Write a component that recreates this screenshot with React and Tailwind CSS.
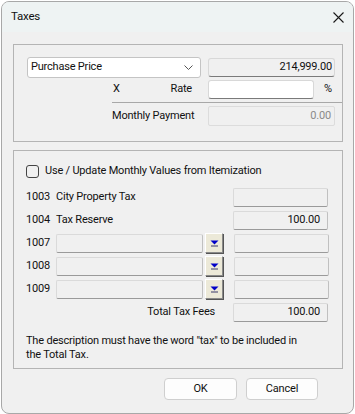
import React from 'react';

const DropBtn = () => (
  <div className="w-[18px] h-[20px] bg-[#ece9d8] border border-t-white border-l-white border-b-[#8a8a8a] border-r-[#8a8a8a] flex items-center justify-center shadow-[1px_1px_0_#555]">
    <svg width="9" height="7" viewBox="0 0 9 7">
      <polygon points="0.5,0.5 8.5,0.5 4.5,4.5" fill="#0000c8" />
      <rect x="1" y="5.5" width="7" height="1" fill="#3a3a6a" />
    </svg>
  </div>
);

const Field = ({ value, className = '' }) => (
  <div className={`h-[19px] w-[95px] bg-[#f0f0f0] border border-[#dadada] border-b-[#9a9a9a] border-r-[#c0c0c0] rounded-[2px] flex items-center justify-end pr-[7px] ${className}`}>
    {value}
  </div>
);

const ItemRow = ({ code }) => (
  <div className="flex items-center h-[20px] mt-[3px]">
    <span className="w-[30px]">{code}</span>
    <div className="w-[147px] h-[19px] bg-[#f0f0f0] border border-[#dadada] border-b-[#9a9a9a] border-r-[#c0c0c0] rounded-[2px]" />
    <div className="ml-[2px]">
      <DropBtn />
    </div>
    <Field className="ml-[11px]" />
  </div>
);

export default function App() {
  return (
    <div className="w-[355px] h-[414px] bg-white font-['Roboto','Liberation_Sans',Arial,sans-serif] text-[11px] tracking-[-0.2px] text-[#111]">
      <div className="ml-[1px] mt-[1px] w-[353px] h-[413px] rounded-[8px] border border-[#a8a8a8] overflow-hidden bg-[#f0f0f0] flex flex-col">
        {/* Title bar */}
        <div className="h-[30px] bg-[#eef3f3] flex items-center justify-between pl-[9px] pr-[9px]">
          <span className="text-[11.5px]">Taxes</span>
          <svg width="11" height="11" viewBox="0 0 11 11">
            <path d="M0.5 0.5 L10.5 10.5 M10.5 0.5 L0.5 10.5" stroke="#1a1a1a" strokeWidth="1.1" />
          </svg>
        </div>

        <div className="pl-[11px] pt-[12px]">
          {/* Group 1 */}
          <div className="w-[330px] h-[98px] border border-[#b4b4b4] pt-[12px] pl-[13px]">
            <div className="flex">
              <div className="w-[174px] h-[21px] bg-white border border-[#c4c4c4] rounded-[3px] flex items-center justify-between pl-[3px] pr-[7px]">
                <span>Purchase Price</span>
                <svg width="9" height="6" viewBox="0 0 9 6">
                  <path d="M0.5 0.5 L4.5 4.5 L8.5 0.5" stroke="#555" fill="none" />
                </svg>
              </div>
              <div className="ml-[7px] mt-[1px] w-[127px] h-[19px] bg-[#f0f0f0] border border-[#d8d8d8] border-b-[#7a7a7a] rounded-[3px] flex items-center justify-end pr-[2px]">
                214,999.00
              </div>
            </div>
            <div className="flex items-center mt-[2px] pl-[85px]">
              <div className="w-[96px] flex justify-between pr-[16px] pl-[1px]">
                <span>X</span>
                <span>Rate</span>
              </div>
              <div className="w-[106px] h-[19px] bg-white border border-[#d8d8d8] border-b-[#7a7a7a] rounded-[3px]" />
              <span className="ml-[10px]">%</span>
            </div>
            <div className="ml-[85px] mt-[3px] h-px bg-[#a8a8a8]" />
            <div className="flex items-center mt-[3px] pl-[85px]">
              <span className="w-[96px]">Monthly Payment</span>
              <div className="w-[127px] h-[20px] bg-[#f0f0f0] border border-[#dcdcdc] rounded-[2px] flex items-center justify-end pr-[3px] text-[#8a8a8a]">
                0.00
              </div>
            </div>
          </div>

          {/* Group 2 */}
          <div className="mt-[8px] w-[330px] h-[219px] border border-[#b4b4b4] pt-[14px] pl-[12px]">
            <div className="flex items-center h-[13px]">
              <div className="w-[13px] h-[13px] border border-[#444] rounded-[3px]" />
              <span className="ml-[6px]">Use / Update Monthly Values from Itemization</span>
            </div>
            <div className="flex items-center h-[19px] mt-[10px]">
              <span className="w-[30px]">1003</span>
              <span className="w-[177px]">City Property Tax</span>
              <Field />
            </div>
            <div className="flex items-center h-[19px] mt-[4px]">
              <span className="w-[30px]">1004</span>
              <span className="w-[177px]">Tax Reserve</span>
              <Field value="100.00" />
            </div>
            <div className="mt-[1px]">
              <ItemRow code="1007" />
              <ItemRow code="1008" />
              <ItemRow code="1009" />
            </div>
            <div className="flex items-center h-[19px] mt-[4px]">
              <span className="w-[189px] text-right">Total Tax Fees</span>
              <Field value="100.00" className="ml-[18px]" />
            </div>
            <p className="mt-[12px] leading-[14px] w-[285px]">
              The description must have the word "tax" to be included in the Total Tax.
            </p>
          </div>

          {/* Buttons */}
          <div className="flex mt-[9px] pl-[151px] gap-[9px]">
            <button className="w-[73px] h-[22px] bg-[#fdfdfd] border border-[#cfcfcf] rounded-[4px]">OK</button>
            <button className="w-[72px] h-[22px] bg-[#fdfdfd] border border-[#cfcfcf] rounded-[4px]">Cancel</button>
          </div>
        </div>
      </div>
    </div>
  );
}
